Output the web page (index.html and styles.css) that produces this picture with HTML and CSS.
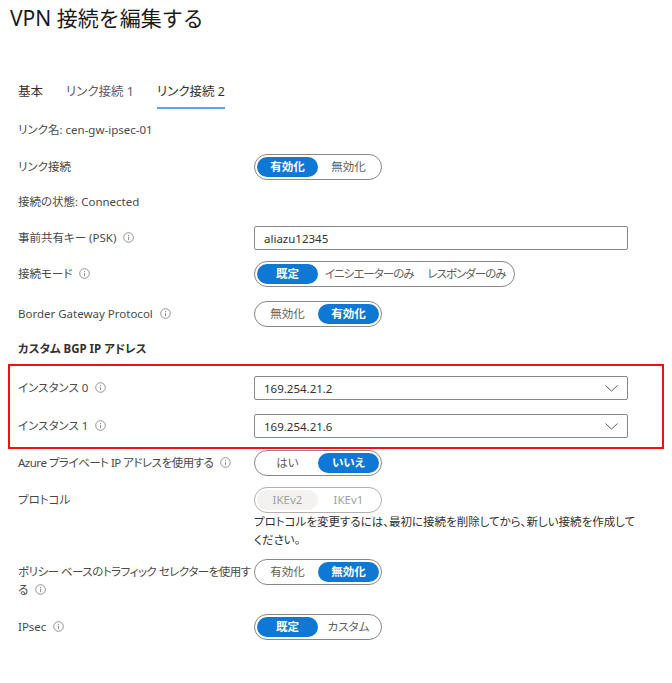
FILE: index.html
```html
<!DOCTYPE html>
<html lang="ja">
<head>
<meta charset="utf-8">
<title>VPN 接続を編集する</title>
<link rel="stylesheet" href="styles.css">
</head>
<body>
<div class="page">
  <h1 class="title">VPN 接続を編集する</h1>

  <nav class="tabs">
    <span class="tab">基本</span>
    <span class="tab tab--muted">リンク接続 1</span>
    <span class="tab tab--active">リンク接続 2</span>
  </nav>

  <div class="row row--name"><div class="label label--wide">リンク名: cen-gw-ipsec-01</div></div>

  <div class="row row--m11">
    <div class="label">リンク接続</div>
    <div class="control">
      <div class="toggle"><span class="opt opt--on">有効化</span><span class="opt">無効化</span></div>
    </div>
  </div>

  <div class="row row--m9"><div class="label label--wide">接続の状態: Connected</div></div>

  <div class="row">
    <div class="label">事前共有キー (PSK)<svg class="info" viewBox="0 0 11 11"><circle cx="5.5" cy="5.5" r="4.8"/><line x1="5.5" y1="4.8" x2="5.5" y2="8.2"/><circle class="dot" cx="5.5" cy="3.3" r="0.6"/></svg></div>
    <div class="control"><div class="input">aliazu12345</div></div>
  </div>

  <div class="row">
    <div class="label">接続モード<svg class="info" viewBox="0 0 11 11"><circle cx="5.5" cy="5.5" r="4.8"/><line x1="5.5" y1="4.8" x2="5.5" y2="8.2"/><circle class="dot" cx="5.5" cy="3.3" r="0.6"/></svg></div>
    <div class="control">
      <div class="toggle"><span class="opt opt--on">既定</span><span class="opt opt--wide">イニシエーターのみ</span><span class="opt opt--wide">レスポンダーのみ</span></div>
    </div>
  </div>

  <div class="row row--m14">
    <div class="label">Border Gateway Protocol<svg class="info" viewBox="0 0 11 11"><circle cx="5.5" cy="5.5" r="4.8"/><line x1="5.5" y1="4.8" x2="5.5" y2="8.2"/><circle class="dot" cx="5.5" cy="3.3" r="0.6"/></svg></div>
    <div class="control">
      <div class="toggle"><span class="opt">無効化</span><span class="opt opt--on">有効化</span></div>
    </div>
  </div>

  <div class="row row--m9"><div class="label label--wide section">カスタム BGP IP アドレス</div></div>

  <div class="highlight">
    <div class="row row--first">
      <div class="label">インスタンス 0<svg class="info" viewBox="0 0 11 11"><circle cx="5.5" cy="5.5" r="4.8"/><line x1="5.5" y1="4.8" x2="5.5" y2="8.2"/><circle class="dot" cx="5.5" cy="3.3" r="0.6"/></svg></div>
      <div class="control"><div class="input select"><span>169.254.21.2</span><svg class="chev" viewBox="0 0 13 7"><polyline points="0.5,0.5 6.5,6 12.5,0.5"/></svg></div></div>
    </div>
    <div class="row row--m12">
      <div class="label">インスタンス 1<svg class="info" viewBox="0 0 11 11"><circle cx="5.5" cy="5.5" r="4.8"/><line x1="5.5" y1="4.8" x2="5.5" y2="8.2"/><circle class="dot" cx="5.5" cy="3.3" r="0.6"/></svg></div>
      <div class="control"><div class="input select"><span>169.254.21.6</span><svg class="chev" viewBox="0 0 13 7"><polyline points="0.5,0.5 6.5,6 12.5,0.5"/></svg></div></div>
    </div>
  </div>

  <div class="row row--m1">
    <div class="label label--tight">Azure プライベート IP アドレスを使用する<svg class="info" viewBox="0 0 11 11"><circle cx="5.5" cy="5.5" r="4.8"/><line x1="5.5" y1="4.8" x2="5.5" y2="8.2"/><circle class="dot" cx="5.5" cy="3.3" r="0.6"/></svg></div>
    <div class="control">
      <div class="toggle"><span class="opt">はい</span><span class="opt opt--on">いいえ</span></div>
    </div>
  </div>

  <div class="row row--m11">
    <div class="label">プロトコル</div>
    <div class="control">
      <div class="toggle toggle--disabled"><span class="opt opt--on">IKEv2</span><span class="opt">IKEv1</span></div>
      <p class="help">プロトコルを変更するには、最初に接続を削除してから、新しい接続を作成して<br>ください。</p>
    </div>
  </div>

  <div class="row">
    <div class="label label--tight label--nowrap">ポリシー ベースのトラフィック セレクターを使用す<br>る<svg class="info" viewBox="0 0 11 11"><circle cx="5.5" cy="5.5" r="4.8"/><line x1="5.5" y1="4.8" x2="5.5" y2="8.2"/><circle class="dot" cx="5.5" cy="3.3" r="0.6"/></svg></div>
    <div class="control">
      <div class="toggle"><span class="opt">有効化</span><span class="opt opt--on">無効化</span></div>
    </div>
  </div>

  <div class="row row--m15">
    <div class="label">IPsec<svg class="info" viewBox="0 0 11 11"><circle cx="5.5" cy="5.5" r="4.8"/><line x1="5.5" y1="4.8" x2="5.5" y2="8.2"/><circle class="dot" cx="5.5" cy="3.3" r="0.6"/></svg></div>
    <div class="control">
      <div class="toggle"><span class="opt opt--on">既定</span><span class="opt">カスタム</span></div>
    </div>
  </div>
</div>
</body>
</html>
```

FILE: styles.css
```css
* { box-sizing: border-box; }

html, body {
  margin: 0;
  background: #ffffff;
}

body {
  font-family: "Noto Sans", "Noto Sans CJK JP", sans-serif;
  font-feature-settings: "palt";
  font-size: 11.5px;
  color: #323130;
}

.page {
  padding: 0 8px;
}

.title {
  margin: 4px 0 0 2px;
  font-size: 21px;
  line-height: 28px;
  font-weight: 400;
  font-feature-settings: normal;
  color: #1b1a19;
}

.tabs {
  display: flex;
  gap: 23px;
  margin-top: 50px;
  padding-left: 10px;
}

.tab {
  font-size: 12.5px;
  line-height: 20px;
  padding-bottom: 5px;
  border-bottom: 2px solid transparent;
  color: #323130;
}

.tab--muted { color: #5f5a6e; }

.tab--active { border-bottom-color: #5aa5e3; }

.row {
  display: flex;
  align-items: flex-start;
  min-height: 26px;
  padding-left: 10px;
  margin-top: 10px;
}

.row--name { margin-top: 8px; }
.row--m1 { margin-top: 1px; }
.row--m9 { margin-top: 9px; }
.row--m11 { margin-top: 11px; }
.row--m12 { margin-top: 12px; }
.row--m14 { margin-top: 14px; }
.row--m15 { margin-top: 15px; }

.label {
  flex: none;
  width: 236px;
  padding: 4px 2px 0 0;
  line-height: 18px;
  color: #4b4a49;
}

.label--wide { width: auto; }

.label--tight { letter-spacing: -0.5px; }

.label--nowrap { white-space: nowrap; }

.section {
  font-weight: 700;
  color: #323130;
}

.info {
  width: 11px;
  height: 11px;
  margin-left: 7px;
  vertical-align: -1px;
  fill: none;
  stroke: #8a8886;
  stroke-width: 0.9;
}

.info .dot {
  fill: #8a8886;
  stroke: none;
}

.control {
  flex: none;
  width: 374px;
}

.toggle {
  display: inline-flex;
  height: 26px;
  padding: 2px;
  border: 1px solid #8a8886;
  border-radius: 13px;
  background: #fff;
}

.opt {
  min-width: 61px;
  height: 20px;
  padding: 0 7px;
  line-height: 20px;
  border-radius: 10px;
  text-align: center;
  color: #5f5e5c;
  white-space: nowrap;
}

.opt--wide {
  padding: 0 7px;
  letter-spacing: -1px;
}

.opt--on {
  background: #0f78d4;
  color: #fff;
  font-weight: 600;
}

.toggle--disabled {
  border-color: #b3b0ad;
}

.toggle--disabled .opt {
  color: #a19f9d;
  font-weight: 400;
}

.toggle--disabled .opt--on {
  background: #f3f2f1;
}

.input {
  display: flex;
  align-items: center;
  justify-content: space-between;
  height: 24px;
  margin-top: 1px;
  padding: 0 9px 0 9px;
  border: 1px solid #8a8886;
  border-radius: 2px;
  color: #323130;
}

.chev {
  width: 13px;
  height: 7px;
  fill: none;
  stroke: #605e5c;
  stroke-width: 1;
}

.highlight {
  width: 656px;
  margin-top: 2px;
  padding: 9px 0 8px;
  border: 2px solid #f01010;
}

.highlight .row {
  padding-left: 8px;
}

.highlight .row--first { margin-top: 0; }

.help {
  margin: 0;
  line-height: 18px;
  white-space: nowrap;
  color: #323130;
}
```
